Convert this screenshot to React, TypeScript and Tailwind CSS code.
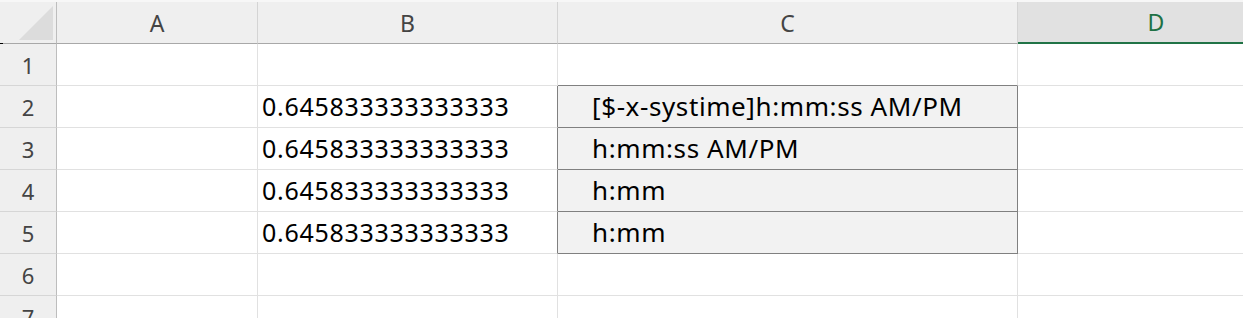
import React from "react";

const cols = ["A", "B", "C", "D"];

interface RowData {
  b: string;
  c: string;
}

const rows: (RowData | null)[] = [
  null,
  { b: "0.645833333333333", c: "[$-x-systime]h:mm:ss AM/PM" },
  { b: "0.645833333333333", c: "h:mm:ss AM/PM" },
  { b: "0.645833333333333", c: "h:mm" },
  { b: "0.645833333333333", c: "h:mm" },
  null,
  null,
];

const App: React.FC = () => {
  return (
    <div
      className="w-[1243px] h-[318px] overflow-hidden bg-white"
      style={{ fontFamily: '"Noto Sans", "Open Sans", sans-serif' }}
    >
      <div className="h-[2px] bg-[#f7f7f7]" />
      <div className="grid grid-cols-[57px_201px_300px_460px_276px]">
        {/* header row */}
        <div className="relative h-[42px] bg-[#efefef] border-r border-[#bdbdbd] border-b border-b-[#a8a8a8]">
          <svg className="absolute right-[3px] bottom-[3px]" width="34" height="34" viewBox="0 0 34 34">
            <polygon points="34,0 34,34 0,34" fill="#dcdcdc" />
          </svg>
          <div className="absolute left-0 bottom-[-1px] w-[3px] h-[1px] bg-black" />
        </div>
        {cols.map((c) =>
          c === "D" ? (
            <div
              key={c}
              className="h-[42px] bg-[#e1e1e1] border-b-2 border-[#217346] flex items-center justify-center text-[23px] text-[#1e7145]"
            >
              {c}
            </div>
          ) : (
            <div
              key={c}
              className="h-[42px] bg-[#efefef] border-r border-[#d4d4d4] border-b border-b-[#a8a8a8] flex items-center justify-center pt-[2px] text-[23px] text-[#444444]"
            >
              {c}
            </div>
          )
        )}

        {rows.map((r, i) => {
          const n = i + 1;
          const boxed = r !== null;
          const aboveBox = n === 1;
          return (
            <React.Fragment key={n}>
              <div className="h-[42px] bg-[#efefef] border-r border-[#bdbdbd] border-b border-b-[#d6d6d6] flex items-center justify-center pt-[2px] text-[22px] text-[#444444]">
                {n}
              </div>
              <div className="h-[42px] border-r border-b border-[#e1e1e1]" />
              <div
                className={`h-[42px] border-b border-[#e1e1e1] flex items-center pl-[4px] text-[25px] tracking-[0.7px] text-black ${
                  boxed ? "border-r border-r-[#808080]" : "border-r"
                }`}
              >
                {r?.b}
              </div>
              <div
                className={`h-[42px] flex items-center pl-[34px] text-[26px] tracking-[0.6px] text-black ${
                  boxed
                    ? "bg-[#f2f2f2] border-r border-b border-[#808080]"
                    : aboveBox
                    ? "border-r border-r-[#e1e1e1] border-b border-b-[#808080]"
                    : "border-r border-b border-[#e1e1e1]"
                }`}
              >
                {r?.c}
              </div>
              <div className="h-[42px] border-b border-[#e1e1e1]" />
            </React.Fragment>
          );
        })}
      </div>
    </div>
  );
};

export default App;
